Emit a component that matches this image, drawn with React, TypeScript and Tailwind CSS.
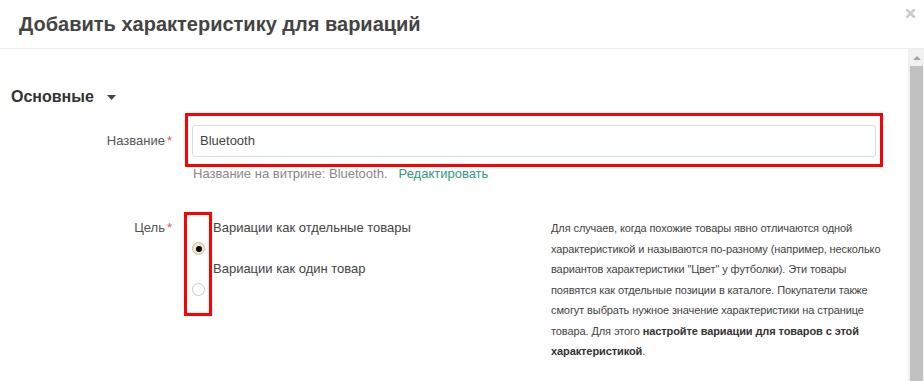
export default function App() {
  return (
    <div className="relative h-[381px] w-[924px] overflow-hidden bg-white font-['Liberation_Sans',Arial,sans-serif]">
      {/* Header */}
      <header className="flex h-[49px] items-center border-b border-[#eeeeee] pl-[19px]">
        <h1 className="text-[20px] font-bold text-[#444444]">Добавить характеристику для вариаций</h1>
      </header>
      <button type="button" className="absolute right-[9px] top-[9px]" aria-label="Закрыть">
        <svg width="9" height="9" viewBox="0 0 9 9">
          <path d="M1 1 L8 8 M8 1 L1 8" stroke="#cccccc" strokeWidth="2.6" strokeLinecap="square" />
        </svg>
      </button>

      <div className="flex h-[332px]">
        {/* Body */}
        <div className="relative flex-1">
          <div className="mt-[38px] flex h-[20px] items-center pl-[11px]">
            <span className="text-[16px] font-bold text-[#333333]">Основные</span>
            <svg className="ml-[13px]" width="9" height="5" viewBox="0 0 9 5">
              <path d="M0 0 L9 0 L4.5 5 Z" fill="#444444" />
            </svg>
          </div>

          {/* Name */}
          <div className="mt-[18px] flex items-center">
            <div className="w-[192px] pr-[20px] text-right text-[13px] text-[#555555]">
              Название<span className="ml-[2px] text-[#e15a5a]">*</span>
            </div>
            <div className="flex h-[32px] w-[684px] items-center rounded-[3px] border border-[#d5dde5] pl-[7px] text-[13px] text-[#444444]">
              Bluetooth
            </div>
          </div>
          <div className="mt-[8px] pl-[193px] text-[13px] leading-[18px] text-[#888888]">
            Название на витрине: Bluetooth.<span className="ml-[11px] text-[#2f9a7e]">Редактировать</span>
          </div>

          {/* Goal */}
          <div className="mt-[35px] flex bg-[#fefefe] pb-[20px]">
            <div className="h-[20px] w-[192px] pr-[20px] text-right text-[13px] leading-[20px] text-[#555555]">
              Цель<span className="ml-[2px] text-[#e15a5a]">*</span>
            </div>
            <div className="w-[359px] text-[13px] text-[#444444]">
              <div className="pl-[21px] leading-[20px]">Вариации как отдельные товары</div>
              <div className="flex h-[21px] items-center">
                <span className="flex h-[13px] w-[13px] items-center justify-center rounded-full border border-[#c9b88f] bg-[#f5e8c8]">
                  <span className="h-[6px] w-[6px] rounded-full bg-black" />
                </span>
              </div>
              <div className="pl-[21px] leading-[20px]">Вариации как один товар</div>
              <div className="flex h-[21px] items-center">
                <span className="h-[13px] w-[13px] rounded-full border border-[#cccccc] bg-white" />
              </div>
            </div>
            <p className="w-[334px] text-[11px] leading-[20.5px] tracking-[-0.1px] text-[#444444]">
              Для случаев, когда похожие товары явно отличаются одной характеристикой и называются по-разному (например, несколько вариантов характеристики "Цвет" у футболки). Эти товары появятся как отдельные позиции в каталоге. Покупатели также смогут выбрать нужное значение характеристики на странице товара. Для этого <b className="text-[#333333]">настройте вариации для товаров с этой характеристикой</b>.
            </p>
          </div>

          {/* Annotation boxes */}
          <div className="absolute left-[185px] top-[64px] h-[54px] w-[698px] border-[3px] border-[#ff0000]" />
          <div className="absolute left-[184px] top-[163px] h-[104px] w-[28px] border-[3px] border-[#ff0000]" />
        </div>

        {/* Scrollbar */}
        <div className="flex w-[16px] flex-col items-center border-l border-[#eeeeee] bg-[#f1f1f1]">
          <div className="flex h-[17px] items-center">
            <svg width="8" height="4" viewBox="0 0 8 4">
              <path d="M0 4 L4 0 L8 4 Z" fill="#a3a3a3" />
            </svg>
          </div>
          <div className="w-[13px] flex-1 bg-[#c1c1c1]" />
        </div>
      </div>
    </div>
  );
}
